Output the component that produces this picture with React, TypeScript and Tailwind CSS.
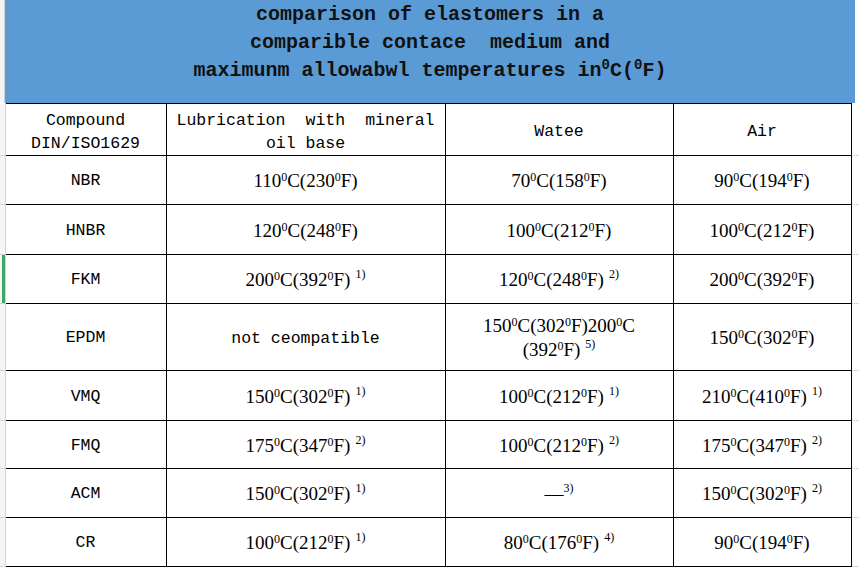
const mono = "font-['Liberation_Mono',monospace]";
const serif = "font-['Liberation_Serif',serif]";

type Temp = { c: string; f: string; note?: string };

function Deg() {
  return <span className="relative -top-[6px] text-[12px]">0</span>;
}

function Note({ n }: { n?: string }) {
  if (!n) return null;
  return <span className="relative -top-[8px] ml-[5px] text-[12px]">{n})</span>;
}

function T({ c, f, note }: Temp) {
  return (
    <span className={`${serif} text-[19px] whitespace-nowrap`}>
      {c}
      <Deg />C({f}
      <Deg />F)
      <Note n={note} />
    </span>
  );
}

type Row = {
  name: string;
  h: string;
  oil: React.ReactNode;
  water: React.ReactNode;
  air: React.ReactNode;
  mark?: boolean;
};

const rows: Row[] = [
  { name: "NBR", h: "h-[49px]", oil: <T c="110" f="230" />, water: <T c="70" f="158" />, air: <T c="90" f="194" /> },
  { name: "HNBR", h: "h-[50px]", oil: <T c="120" f="248" />, water: <T c="100" f="212" />, air: <T c="100" f="212" /> },
  {
    name: "FKM",
    h: "h-[49px]",
    mark: true,
    oil: <T c="200" f="392" note="1" />,
    water: <T c="120" f="248" note="2" />,
    air: <T c="200" f="392" />,
  },
  {
    name: "EPDM",
    h: "h-[67px]",
    oil: <span className={`${mono} text-[16.5px]`}>not ceompatible</span>,
    water: (
      <div className={`${serif} text-[19px] leading-[21px] px-6`}>
        <div>
          150<Deg />C(302<Deg />F)200<Deg />C
        </div>
        <div>
          (392<Deg />F)
          <Note n="5" />
        </div>
      </div>
    ),
    air: <T c="150" f="302" />,
  },
  { name: "VMQ", h: "h-[50px]", oil: <T c="150" f="302" note="1" />, water: <T c="100" f="212" note="1" />, air: <T c="210" f="410" note="1" /> },
  { name: "FMQ", h: "h-[48px]", oil: <T c="175" f="347" note="2" />, water: <T c="100" f="212" note="2" />, air: <T c="175" f="347" note="2" /> },
  {
    name: "ACM",
    h: "h-[49px]",
    oil: <T c="150" f="302" note="1" />,
    water: (
      <span className={`${serif} text-[19px]`}>
        —<span className="relative -top-[8px] text-[12px]">3)</span>
      </span>
    ),
    air: <T c="150" f="302" note="2" />,
  },
  { name: "CR", h: "h-[49px]", oil: <T c="100" f="212" note="1" />, water: <T c="80" f="176" note="4" />, air: <T c="90" f="194" /> },
];

function Gutter({ mark }: { mark?: boolean }) {
  return (
    <td className="p-0 bg-[#f4f4f4] border-r border-b border-[#d4d4d4]">
      {mark && <div className="ml-[2px] w-[3px] h-full min-h-[48px] bg-[#3fa56b]" />}
    </td>
  );
}

function Filler() {
  return <td className="p-0 border-b border-[#dadada]" />;
}

const cell = "border-b border-r border-black text-center align-middle px-0 pb-0 pt-[3px] text-black";
const head = "border-b border-r border-t border-black text-center align-middle px-0 pb-0 pt-[5px] text-black";

export default function App() {
  return (
    <div className="w-[859px] h-[568px] bg-white overflow-hidden">
      <div className="flex h-[103px]">
        <div className="w-[5px] bg-[#f4f4f4] border-r border-[#d4d4d4]" />
        <div
          className={`w-[850px] bg-[#5b9bd5] text-[#111111] text-center text-[20px] font-bold leading-[28px] pt-[1px] ${mono}`}
        >
          <div>comparison of elastomers in a</div>
          <div className="whitespace-pre">comparible contace  medium and</div>
          <div>
            maximunm allowabwl temperatures in
            <span className="relative -top-[7px] text-[14px]">0</span>C(
            <span className="relative -top-[7px] text-[14px]">0</span>F)
          </div>
        </div>
      </div>
      <table className="border-collapse table-fixed w-[859px]">
        <colgroup>
          <col className="w-[5px]" />
          <col className="w-[161px]" />
          <col className="w-[279px]" />
          <col className="w-[228px]" />
          <col className="w-[178px]" />
          <col className="w-[8px]" />
        </colgroup>
        <tbody>
          <tr className="h-[52px]">
            <Gutter />
            <td className={`${head} ${mono} text-[16.5px] leading-[23px]`}>
              Compound
              <br />
              DIN/ISO1629
            </td>
            <td className={`${head} ${mono} text-[16.5px] leading-[23px] !px-[10px] text-justify [text-align-last:center]`}>
              Lubrication with mineral oil base
            </td>
            <td className={`${head} ${mono} text-[16.5px]`}>Watee</td>
            <td className={`${head} ${mono} text-[16.5px]`}>Air</td>
            <Filler />
          </tr>
          {rows.map((r) => (
            <tr key={r.name} className={r.h}>
              <Gutter mark={r.mark} />
              <td className={`${cell} ${mono} text-[16.5px]`}>{r.name}</td>
              <td className={cell}>{r.oil}</td>
              <td className={cell}>{r.water}</td>
              <td className={cell}>{r.air}</td>
              <Filler />
            </tr>
          ))}
        </tbody>
      </table>
    </div>
  );
}
